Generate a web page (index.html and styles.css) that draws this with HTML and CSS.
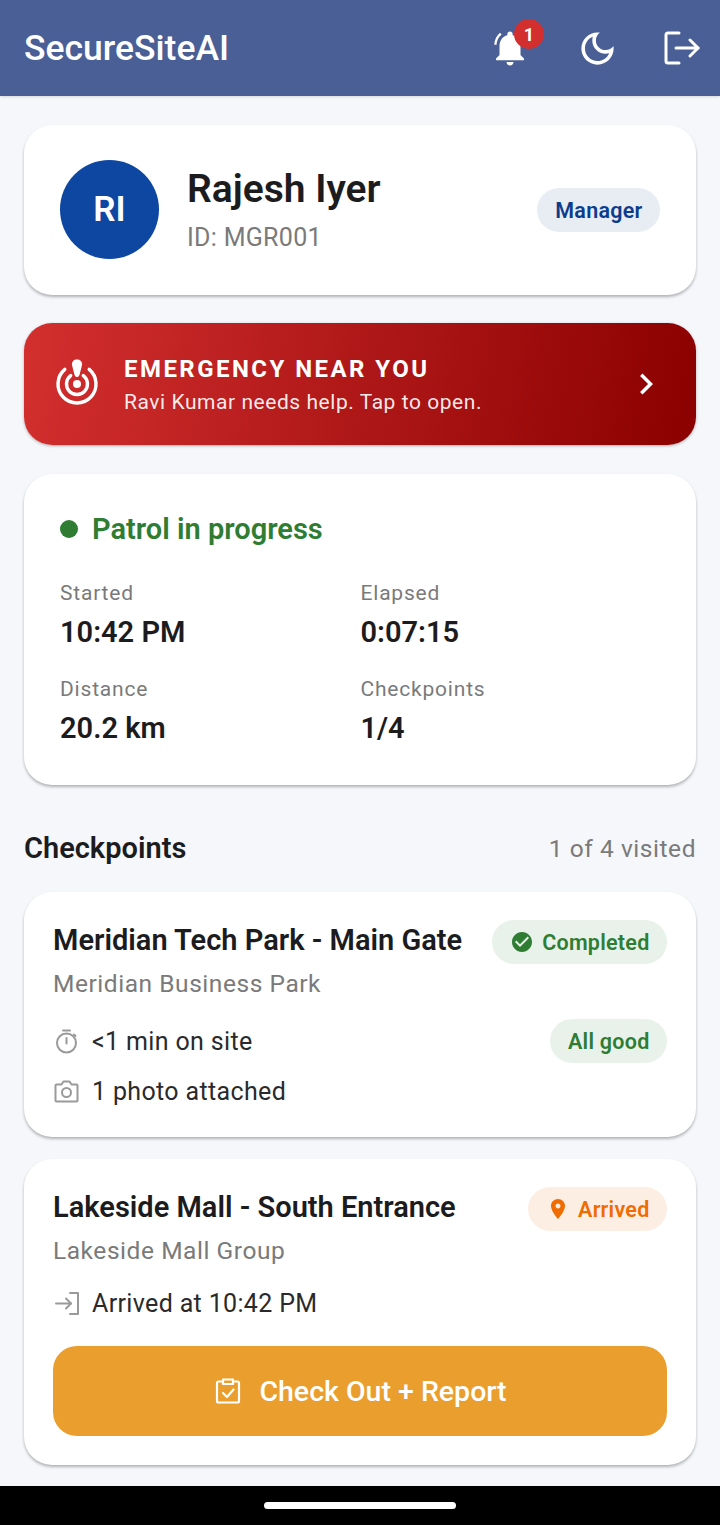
FILE: index.html
```html
<!DOCTYPE html>
<html lang="en">
<head>
    <meta charset="UTF-8">
    <meta name="viewport" content="width=device-width, initial-scale=1.0">
    <title>SecureSiteAI</title>
    <link rel="stylesheet" href="styles.css">
</head>
<body>
    <header class="app-bar">
        <div class="app-title">SecureSiteAI</div>
        <div class="app-actions">
            <div class="bell">
                <svg width="42" height="42" viewBox="0 0 24 24" fill="#fff"><path d="M12 22c1.1 0 2-.9 2-2h-4c0 1.1.9 2 2 2zm6-6v-5c0-3.07-1.63-5.64-4.5-6.32V4c0-.83-.67-1.5-1.5-1.5s-1.5.67-1.5 1.5v.68C7.64 5.36 6 7.92 6 11v5l-2 2v1h16v-1l-2-2z"/><path d="M7.2 4.3 6.3 3.300C4.300 5 3.100 7.400 3 10.200h1.300c.1-2.400 1.200-4.500 2.900-5.900z"/></svg>
                <span class="bell-badge">1</span>
            </div>
            <svg width="43" height="43" viewBox="0 0 24 24" fill="#fff"><path d="M9.37 5.51c-.18.64-.27 1.31-.27 1.99 0 4.08 3.32 7.4 7.4 7.4.68 0 1.35-.09 1.99-.27C17.45 17.19 14.93 19 12 19c-3.86 0-7-3.14-7-7 0-2.93 1.81-5.45 4.37-6.49zM12 3c-4.97 0-9 4.03-9 9s4.03 9 9 9 9-4.03 9-9c0-.46-.04-.92-.1-1.36-.98 1.37-2.58 2.26-4.4 2.26-2.98 0-5.4-2.42-5.4-5.4 0-1.81.89-3.42 2.26-4.4-.44-.06-.9-.1-1.36-.1z"/></svg>
            <svg width="36" height="34" viewBox="0 0 36 34" fill="none" stroke="#fff" stroke-width="3" stroke-linecap="round" stroke-linejoin="round"><path d="M15 2H4a2 2 0 0 0-2 2v26a2 2 0 0 0 2 2h11"/><path d="M12 17h22"/><path d="M26 9l8 8-8 8"/></svg>
        </div>
    </header>

    <main class="content">
        <section class="card profile-card">
            <div class="avatar">RI</div>
            <div class="profile-info">
                <div class="profile-name">Rajesh Iyer</div>
                <div class="profile-id">ID: MGR001</div>
            </div>
            <span class="chip chip-role">Manager</span>
        </section>

        <section class="emergency">
            <svg width="48" height="52" viewBox="0 0 48 52" fill="none" stroke="#fff" stroke-width="3.400" stroke-linecap="round">
                <path d="M11.800 11.400A19 19 0 1 0 36.200 11.400"/>
                <path d="M17.700 17.600A10.500 10.500 0 1 0 30.300 17.600"/>
                <circle cx="24" cy="26" r="4" fill="#fff" stroke="none"/>
                <path d="M24 19C22 19 21.500 17 21 15L19 7C18.500 3.500 21 1.500 24 1.500C27 1.500 29.500 3.500 29 7L27 15C26.500 17 26 19 24 19Z" fill="#fff" stroke="none"/>
            </svg>
            <div class="emergency-text">
                <div class="emergency-title">EMERGENCY NEAR YOU</div>
                <div class="emergency-sub">Ravi Kumar needs help. Tap to open.</div>
            </div>
            <svg width="42" height="42" viewBox="0 0 24 24" fill="#fff"><path d="M8.590 16.590 13.170 12 8.590 7.410 10 6l6 6-6 6z"/></svg>
        </section>

        <section class="card patrol-card">
            <div class="patrol-status"><span class="dot"></span>Patrol in progress</div>
            <div class="stats">
                <div><div class="stat-label">Started</div><div class="stat-value">10:42 PM</div></div>
                <div><div class="stat-label">Elapsed</div><div class="stat-value">0:07:15</div></div>
                <div><div class="stat-label">Distance</div><div class="stat-value">20.2 km</div></div>
                <div><div class="stat-label">Checkpoints</div><div class="stat-value">1/4</div></div>
            </div>
        </section>

        <div class="section-head">
            <h2>Checkpoints</h2>
            <span>1 of 4 visited</span>
        </div>

        <section class="card checkpoint">
            <div class="cp-top">
                <div>
                    <div class="cp-name">Meridian Tech Park - Main Gate</div>
                    <div class="cp-org">Meridian Business Park</div>
                </div>
                <span class="chip chip-green">
                    <svg width="24" height="24" viewBox="0 0 24 24" fill="#2e7d32"><path d="M12 2C6.480 2 2 6.480 2 12s4.480 10 10 10 10-4.480 10-10S17.520 2 12 2zm-2 15-5-5 1.410-1.410L10 14.170l7.590-7.590L19 8l-9 9z"/></svg>
                    Completed
                </span>
            </div>
            <div class="cp-meta-row">
                <div class="cp-meta">
                    <svg width="27" height="27" viewBox="0 0 27 27" fill="none" stroke="#9a9a9a" stroke-width="2" stroke-linecap="round"><circle cx="13.500" cy="15" r="9.500"/><path d="M10 2.500h7"/><path d="M13.500 10v5.500"/><path d="M21 6.500l1.500 1.500"/></svg>
                    &lt;1 min on site
                </div>
                <span class="chip chip-green">All good</span>
            </div>
            <div class="cp-meta">
                <svg width="27" height="27" viewBox="0 0 27 27" fill="none" stroke="#9a9a9a" stroke-width="2" stroke-linejoin="round"><path d="M3.500 6.500h5l2-3h6l2 3h5a1 1 0 0 1 1 1v15a1 1 0 0 1-1 1h-20a1 1 0 0 1-1-1v-15a1 1 0 0 1 1-1z"/><circle cx="13.500" cy="14.500" r="4.500"/></svg>
                1 photo attached
            </div>
        </section>

        <section class="card checkpoint">
            <div class="cp-top">
                <div>
                    <div class="cp-name">Lakeside Mall - South Entrance</div>
                    <div class="cp-org">Lakeside Mall Group</div>
                </div>
                <span class="chip chip-orange">
                    <svg width="24" height="24" viewBox="0 0 24 24" fill="#ef6c00"><path d="M12 2C8.130 2 5 5.130 5 9c0 5.250 7 13 7 13s7-7.750 7-13c0-3.870-3.130-7-7-7zm0 9.500c-1.380 0-2.500-1.120-2.500-2.500s1.120-2.500 2.500-2.500 2.500 1.120 2.500 2.500-1.120 2.500-2.500 2.500z"/></svg>
                    Arrived
                </span>
            </div>
            <div class="cp-meta">
                <svg width="27" height="27" viewBox="0 0 27 27" fill="none" stroke="#9a9a9a" stroke-width="2" stroke-linecap="round" stroke-linejoin="round"><path d="M3 13.500h15"/><path d="M13 8.500l5 5-5 5"/><path d="M17 3h8v21h-8"/></svg>
                Arrived at 10:42 PM
            </div>
            <button class="checkout-btn">
                <svg width="26" height="28" viewBox="0 0 26 28" fill="none" stroke="#fff" stroke-width="2.200" stroke-linecap="round" stroke-linejoin="round"><path d="M8 4.500H3.500a1.500 1.500 0 0 0-1.500 1.500v18a1.500 1.500 0 0 0 1.500 1.500h19a1.500 1.500 0 0 0 1.500-1.500V6a1.500 1.500 0 0 0-1.500-1.500H18"/><path d="M8 2.500h10v4.500H8z"/><path d="M8 16l4 4 6.500-7.500"/></svg>
                Check Out + Report
            </button>
        </section>
    </main>

    <div class="nav-bar"><span class="nav-handle"></span></div>
</body>
</html>
```

FILE: styles.css
```css
* {
    margin: 0;
    padding: 0;
    box-sizing: border-box;
}

body {
    font-family: Roboto, "Liberation Sans", sans-serif;
    background: #f5f7fb;
    color: #1c1c1e;
    width: 720px;
    height: 1525px;
    overflow: hidden;
    display: flex;
    flex-direction: column;
}

.app-bar {
    height: 96px;
    flex: none;
    background: #4a5f95;
    display: flex;
    align-items: center;
    justify-content: space-between;
    padding: 0 20px 0 24px;
    box-shadow: 0 1px 2px rgba(0, 0, 0, 0.12);
}

.app-title {
    color: #fff;
    font-size: 35.5px;
    font-weight: 500;
}

.app-actions {
    display: flex;
    align-items: center;
    gap: 45px;
}

.bell {
    position: relative;
    display: flex;
}

.bell-badge {
    position: absolute;
    top: -8px;
    right: -13px;
    width: 30px;
    height: 30px;
    border-radius: 50%;
    background: #d32f2f;
    color: #fff;
    font-size: 18px;
    font-weight: 700;
    display: flex;
    align-items: center;
    justify-content: center;
}

.content {
    flex: 1;
    padding: 29px 24px 0;
    display: flex;
    flex-direction: column;
}

.card {
    background: #fff;
    border-radius: 28px;
    box-shadow: 0 2px 3px rgba(0, 0, 0, 0.28);
}

.profile-card {
    height: 170px;
    display: flex;
    align-items: center;
    padding: 0 36px 1px;
}

.avatar {
    width: 99px;
    height: 99px;
    border-radius: 50%;
    background: #0d47a1;
    color: #fff;
    font-size: 35px;
    font-weight: 600;
    display: flex;
    align-items: center;
    justify-content: center;
    flex: none;
}

.profile-info {
    flex: 1;
    margin-left: 28px;
}

.profile-name {
    font-size: 39px;
    font-weight: 600;
    line-height: 44px;
    margin-top: -1px;
}

.profile-id {
    font-size: 25px;
    color: #7a7a7a;
    margin-top: 12px;
    letter-spacing: 0.3px;
}

.chip {
    display: inline-flex;
    align-items: center;
    gap: 8px;
    height: 44px;
    padding: 0 17.5px 0 18px;
    border-radius: 22px;
    font-size: 21.5px;
    font-weight: 600;
    letter-spacing: 0.25px;
    white-space: nowrap;
    flex: none;
}

.cp-top .chip {
    margin-top: -1px;
}

.chip-role {
    background: #e8edf4;
    color: #0d3c8c;
    margin-top: 1px;
}

.chip-green {
    background: #e8f2ea;
    color: #2e7d32;
}

.chip-orange {
    background: #fdeee4;
    color: #ef6c00;
}

.emergency {
    margin-top: 28px;
    height: 122px;
    border-radius: 28px;
    background: linear-gradient(100deg, #d32f2f, #8b0000);
    display: flex;
    align-items: center;
    padding: 0 29px;
    color: #fff;
    box-shadow: 0 1px 3px rgba(0, 0, 0, 0.3);
}

.emergency-text {
    flex: 1;
    margin-left: 23px;
}

.emergency-title {
    font-size: 24px;
    font-weight: 700;
    letter-spacing: 2.45px;
}

.emergency-sub {
    font-size: 21px;
    margin-top: 7px;
    letter-spacing: 0.55px;
    color: rgba(255, 255, 255, 0.92);
}

.patrol-card {
    margin-top: 29px;
    height: 311px;
    padding: 38px 36px 0;
}

.patrol-status {
    display: flex;
    align-items: center;
    gap: 14px;
    color: #2e7d32;
    font-size: 29px;
    font-weight: 600;
}

.dot {
    width: 18px;
    height: 18px;
    border-radius: 50%;
    background: #2e7d32;
}

.stats {
    display: grid;
    grid-template-columns: 300.5px 1fr;
    row-gap: 28px;
    margin-top: 35px;
}

.stat-label {
    font-size: 21px;
    color: #7a7a7a;
    letter-spacing: 0.8px;
}

.stat-value {
    font-size: 29px;
    font-weight: 600;
    margin-top: 10px;
}

.section-head {
    display: flex;
    align-items: center;
    justify-content: space-between;
    margin-top: 46px;
    height: 34px;
}

.section-head h2 {
    font-size: 29px;
    font-weight: 600;
}

.section-head span {
    font-size: 24.5px;
    color: #7a7a7a;
    letter-spacing: 0.55px;
}

.checkpoint {
    margin-top: 27px;
    padding: 29px 29px 28px;
}

.checkpoint + .checkpoint {
    margin-top: 22px;
    padding-bottom: 29px;
}

.cp-top {
    display: flex;
    justify-content: space-between;
    align-items: flex-start;
}

.cp-name {
    font-size: 29px;
    font-weight: 600;
    line-height: 38px;
}

.cp-org {
    font-size: 24.5px;
    color: #7a7a7a;
    margin-top: 10px;
    letter-spacing: 0.55px;
}

.cp-meta-row {
    display: flex;
    justify-content: space-between;
    align-items: center;
    margin-top: 21px;
}

.cp-meta {
    display: flex;
    align-items: center;
    gap: 12px;
    font-size: 25px;
    letter-spacing: 0.35px;
    color: #2a2a2c;
    margin-top: 20px;
    height: 36px;
}

.cp-meta-row .cp-meta {
    margin-top: 0;
}

.cp-meta-row + .cp-meta {
    margin-top: 10px;
}

.checkout-btn {
    width: 100%;
    height: 90px;
    margin-top: 25px;
    padding-left: 2px;
    background: #ea9e2d;
    border: none;
    border-radius: 24px;
    color: #fff;
    font-family: inherit;
    font-size: 28.5px;
    font-weight: 500;
    display: flex;
    align-items: center;
    justify-content: center;
    gap: 18px;
}

.nav-bar {
    height: 39px;
    flex: none;
    background: #000;
    display: flex;
    align-items: center;
    justify-content: center;
}

.nav-handle {
    width: 192px;
    height: 7px;
    border-radius: 4px;
    background: #fff;
}
```
